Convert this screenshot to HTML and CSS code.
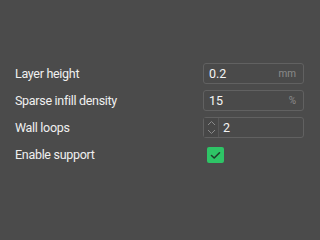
FILE: index.html
```html
<!DOCTYPE html>
<html lang="en">
<head>
  <meta charset="UTF-8" />
  <title>Print settings</title>
  <link rel="stylesheet" href="styles.css">
</head>
<body>
  <div class="settings">
    <div class="row">
      <span class="label">Layer height</span>
      <div class="field">
        <span class="value">0.2</span>
        <span class="unit">mm</span>
      </div>
    </div>
    <div class="row">
      <span class="label">Sparse infill density</span>
      <div class="field">
        <span class="value">15</span>
        <span class="unit">%</span>
      </div>
    </div>
    <div class="row">
      <span class="label">Wall loops</span>
      <div class="field spin">
        <div class="stepper">
          <svg width="9" height="6" viewBox="0 0 9 6"><path d="M1 5 L4.5 1.5 L8 5" fill="none" stroke="#8a8a8a" stroke-width="1"/></svg>
          <svg width="9" height="6" viewBox="0 0 9 6"><path d="M1 1 L4.5 4.5 L8 1" fill="none" stroke="#8a8a8a" stroke-width="1"/></svg>
        </div>
        <span class="value">2</span>
      </div>
    </div>
    <div class="row">
      <span class="label">Enable support</span>
      <div class="check">
        <svg width="11" height="9" viewBox="0 0 11 9"><path d="M1.5 4.5 L4.2 7 L9.5 1.8" fill="none" stroke="#1f3d2a" stroke-width="1.6" stroke-linecap="round" stroke-linejoin="round"/></svg>
      </div>
    </div>
  </div>
</body>
</html>
```

FILE: styles.css
```css
* { box-sizing: border-box; }

body {
  margin: 0;
  background-color: #4b4b4b;
  color: #f0f0f0;
  font-family: Roboto, sans-serif;
}

.settings {
  padding: 60px 16px 0 15px;
}

.row {
  display: grid;
  grid-template-columns: 188px 101px;
  align-items: center;
  height: 27px;
}

.label {
  font-size: 12.5px;
  letter-spacing: -0.3px;
}

.field {
  display: flex;
  align-items: center;
  height: 21px;
  border: 1px solid #616161;
  border-radius: 3px;
  background-color: #4a4a4a;
  padding: 0 7px 0 5px;
}

.value {
  flex: 1;
  font-size: 12.5px;
  color: #f4f4f4;
}

.unit {
  font-size: 10px;
  color: #8c8c8c;
}

.spin {
  padding-left: 0;
}

.stepper {
  display: flex;
  flex-direction: column;
  align-items: center;
  justify-content: center;
  gap: 3px;
  width: 15px;
  height: 100%;
  margin-right: 4px;
  background-color: #474747;
  border-right: 1px solid #575757;
}

.stepper svg { display: block; }

.check {
  display: flex;
  align-items: center;
  justify-content: center;
  width: 17px;
  height: 16px;
  margin-left: 4px;
  margin-top: 1px;
  border-radius: 2px;
  background-color: #2ec466;
}
```
